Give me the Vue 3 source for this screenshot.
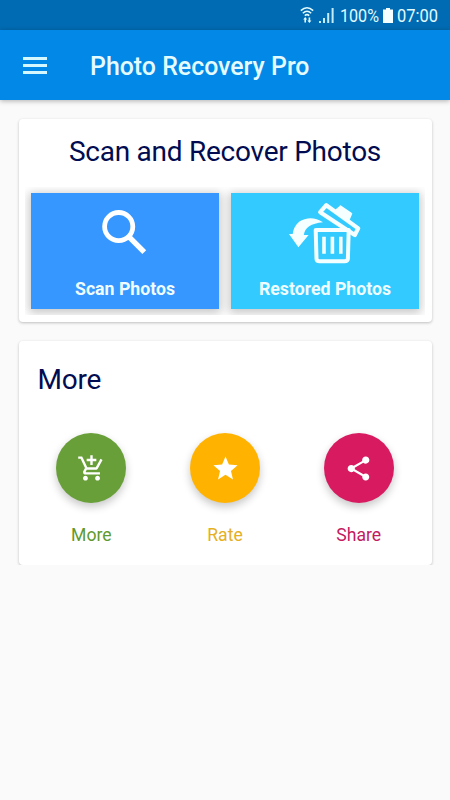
<script setup>
const tiles = [
  { id: 'scan', label: 'Scan Photos' },
  { id: 'restored', label: 'Restored Photos' }
]

const actions = [
  {
    id: 'more',
    label: 'More',
    icon: 'M11 9h2V6h3V4h-3V1h-2v3H8v2h3v3zm-4 9c-1.1 0-1.99.9-1.99 2S5.9 22 7 22s2-.9 2-2-.9-2-2-2zm10 0c-1.1 0-1.99.9-1.99 2s.89 2 1.99 2 2-.9 2-2-.9-2-2-2zm-9.83-3.25l.03-.12.9-1.63h7.45c.75 0 1.41-.41 1.75-1.03l3.86-7.01L19.42 4h-.01l-1.1 2-2.76 5H8.53l-.13-.27L6.16 6l-.95-2-.94-2H1v2h2l3.6 7.59-1.35 2.45c-.16.28-.25.61-.25.96 0 1.1.9 2 2 2h12v-2H7.42c-.13 0-.25-.11-.25-.25z'
  },
  {
    id: 'rate',
    label: 'Rate',
    icon: 'M12 17.27L18.18 21l-1.64-7.03L22 9.24l-7.19-.61L12 2 9.19 8.63 2 9.24l5.46 4.73L5.82 21z'
  },
  {
    id: 'share',
    label: 'Share',
    icon: 'M18 16.08c-.76 0-1.44.3-1.96.77L8.91 12.7c.05-.23.09-.46.09-.7s-.04-.47-.09-.7l7.05-4.11c.54.5 1.25.81 2.04.81 1.66 0 3-1.34 3-3s-1.34-3-3-3-3 1.34-3 3c0 .24.04.47.09.7L8.04 9.81C7.5 9.31 6.79 9 6 9c-1.66 0-3 1.34-3 3s1.34 3 3 3c.79 0 1.5-.31 2.04-.81l7.12 4.16c-.05.21-.08.43-.08.65 0 1.61 1.31 2.92 2.92 2.92 1.61 0 2.92-1.31 2.92-2.92s-1.31-2.92-2.92-2.92z'
  }
]
</script>

<template>
  <div class="screen">
    <div class="status-bar">
      <svg class="wifi" viewBox="0 0 14 18">
        <g fill="none" stroke="#e2fbff" stroke-width="1.5">
          <path d="M.8 4.6Q7-1.2 13.2 4.6" />
          <path d="M2.8 7.2Q7 3.2 11.2 7.2" />
          <path d="M4.8 9.6Q7 7.6 9.2 9.6" />
        </g>
        <path d="M5.2 11l2 2.6H6v3H4.4v-3H3.2zM9.4 17l-2-2.6h1.2v-3h1.6v3h1.2z" fill="#e2fbff" />
      </svg>
      <svg class="signal" viewBox="0 0 16 16">
        <path d="M0 16v-2h2v2zM4 16v-5h2v5zM8.2 16V6h2v10zM12.6 16V1h2v15z" fill="#c5ecfa" />
      </svg>
      <svg class="percent" viewBox="0 0 40 26">
        <text x="0" y="19.5" textLength="39" lengthAdjust="spacingAndGlyphs">100%</text>
      </svg>
      <svg class="battery" viewBox="0 0 10 15">
        <path d="M3 0h4v1.5h3V15H0V1.5h3z" fill="#f4ffff" />
      </svg>
      <svg class="clock" viewBox="0 0 42 26">
        <text x="0" y="19.5" textLength="41" lengthAdjust="spacingAndGlyphs">07:00</text>
      </svg>
    </div>

    <header class="toolbar">
      <div class="menu">
        <span></span>
        <span></span>
        <span></span>
      </div>
      <h1 class="app-title">Photo Recovery Pro</h1>
    </header>

    <main class="content">
      <section class="card recover">
        <h2 class="recover-title">Scan and Recover Photos</h2>
        <div class="tiles">
          <div v-for="tile in tiles" :key="tile.id" :class="['tile', tile.id]">
            <svg v-if="tile.id === 'scan'" class="tile-icon" viewBox="0 0 85 70">
              <g fill="none" stroke="#fff">
                <circle cx="35.7" cy="28.6" r="14.1" stroke-width="4.8" />
                <path d="M45.5 38.4L61.3 54.2" stroke-width="5.4" />
              </g>
            </svg>
            <svg v-else class="tile-icon" viewBox="-2 0 85 70">
              <g fill="none" stroke="#f5ffff" stroke-linejoin="round">
                <path d="M30.7 32h33l-.8 28.6q-.2 2.6-3.2 2.6H34.6q-3 0-3.1-2.6z" stroke-width="4" />
                <path d="M39 38.7v17M47.4 38.7v17M55.8 38.7v17" stroke-width="3.6" />
                <path d="M41.3 7.2L73.2 30.4 69.8 37 35.2 14.2z" stroke-width="4.2" />
              </g>
              <path d="M54.3 9.4l1.2-1.4L66.5 15.6l-2.8 6.5-14-9z" fill="#f5ffff" stroke="#f5ffff" stroke-width="1.5" stroke-linejoin="round" />
              <path d="M38 24.2Q30.5 19.5 22.7 20.5 9.5 22.5 7.7 36H4l9.4 13.3L23.6 37h-4.8Q20 25.8 38 24.2z" fill="#f5ffff" />
            </svg>
            <span class="tile-label">{{ tile.label }}</span>
          </div>
        </div>
      </section>

      <section class="card more-card">
        <h2 class="more-title">More</h2>
        <div class="actions">
          <div v-for="action in actions" :key="action.id" :class="['action', action.id]">
            <div class="fab">
              <svg viewBox="0 0 24 24">
                <path :d="action.icon" fill="#fff" />
              </svg>
            </div>
            <span class="action-label">{{ action.label }}</span>
          </div>
        </div>
      </section>
    </main>
  </div>
</template>

<style>
body {
  background: #fafafa;
}
</style>

<style scoped>
.screen {
  width: 450px;
  height: 800px;
  overflow: hidden;
  background: #fafafa;
  font-family: Roboto, sans-serif;
}

.status-bar {
  height: 30px;
  padding: 0 10.5px 0 300px;
  box-sizing: border-box;
  display: flex;
  align-items: center;
  background: #006bb3;
}

.status-bar svg {
  display: block;
  flex: none;
  overflow: visible;
}

.status-bar text {
  fill: #e2fbff;
  font-size: 18.5px;
}

.wifi {
  width: 14px;
  height: 18px;
}

.signal {
  width: 16px;
  height: 16px;
  margin-left: 5px;
}

.percent {
  width: 40px;
  height: 26px;
  margin-left: 5px;
}

.battery {
  width: 10px;
  height: 15px;
  margin-left: 2.5px;
}

.clock {
  width: 42px;
  height: 26px;
  margin-left: 4.5px;
}

.toolbar {
  position: relative;
  height: 70px;
  padding-left: 23px;
  display: flex;
  align-items: center;
  background: #0288e6;
  box-shadow: 0 1px 5px rgba(0, 0, 0, 0.3);
}

.menu {
  width: 24px;
  display: flex;
  flex-direction: column;
  gap: 4px;
}

.menu span {
  height: 3px;
  background: #d5f8ff;
}

.app-title {
  margin: 3px 0 0 43px;
  font-size: 24.9px;
  font-weight: 500;
  line-height: 30px;
  color: #e4fcff;
  white-space: nowrap;
}

.content {
  padding: 19px 18.5px 0;
}

.card {
  background: #fff;
  border-radius: 4px;
  box-shadow: 0 1px 3px rgba(0, 0, 0, 0.24);
}

.recover {
  height: 203px;
}

.recover-title {
  margin: 0;
  padding-top: 15px;
  font-size: 28px;
  font-weight: 400;
  line-height: 36px;
  letter-spacing: -0.25px;
  color: #020c50;
  text-align: center;
  white-space: nowrap;
}

/* the strip cuts off the tile shadows at its own edges */
.tiles {
  margin: 17px 6.5px 0;
  height: 128px;
  padding: 6px;
  box-sizing: border-box;
  display: flex;
  gap: 12px;
  overflow: hidden;
}

.tile {
  flex: 1;
  height: 116px;
  display: flex;
  flex-direction: column;
  align-items: center;
  box-shadow: 0 2px 9px 2px rgba(0, 0, 0, 0.22);
}

.tile.scan {
  background: #3597ff;
}

.tile.restored {
  background: #33cbff;
}

.tile-icon {
  width: 85px;
  height: 70px;
  margin-top: 5px;
}

.tile-label {
  margin-top: 10px;
  font-size: 17.7px;
  font-weight: 700;
  line-height: 22px;
  color: #f0fdff;
}

.more-card {
  height: 224px;
  margin-top: 19px;
  clip-path: inset(-4px -5px 0 -5px);
}

.more-title {
  margin: 0;
  padding: 21px 0 0 19px;
  font-size: 28px;
  font-weight: 400;
  line-height: 36px;
  letter-spacing: -0.25px;
  color: #020c50;
}

.actions {
  margin: 35px 6px 0;
  display: flex;
}

.action {
  flex: 1;
  display: flex;
  flex-direction: column;
  align-items: center;
}

.fab {
  width: 70px;
  height: 70px;
  border-radius: 50%;
  display: flex;
  align-items: center;
  justify-content: center;
  box-shadow: 0 4px 9px rgba(0, 0, 0, 0.22);
}

.fab svg {
  width: 29px;
  height: 29px;
}

.action-label {
  margin-top: 21px;
  font-size: 17.6px;
  line-height: 22px;
}

.more .fab {
  background: #689f38;
}

.more .action-label {
  color: #5f9a2d;
}

.rate .fab {
  background: #ffb300;
}

.rate .action-label {
  color: #e5b022;
}

.share .fab {
  background: #d81b60;
}

.share .action-label {
  color: #c41a60;
}
</style>
